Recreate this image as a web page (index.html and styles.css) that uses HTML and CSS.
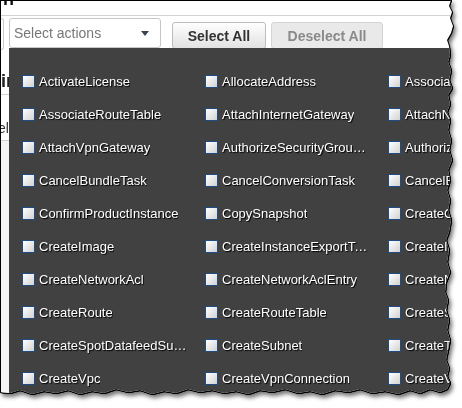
FILE: index.html
```html
<!DOCTYPE html>
<html>
<head>
<meta charset="utf-8">
<link rel="stylesheet" href="styles.css">
</head>
<body>
<div class="frame">
  <div class="paper">
    <div class="top"><span class="top-glyph">n</span></div>
    <div class="toolbar">
      <div class="stub"></div>
      <div class="select">
        <span class="select-text">Select actions</span>
        <span class="caret"></span>
      </div>
      <button class="btn btn-primary">Select All</button>
      <button class="btn btn-disabled">Deselect All</button>
    </div>
    <div class="main">
      <div class="side">
        <div class="side-head">ir</div>
        <div class="side-text">el</div>
        <div class="side-rest"></div>
      </div>
      <div class="panel">
        <label class="item"><input type="checkbox" class="box"><span>ActivateLicense</span></label>
        <label class="item"><input type="checkbox" class="box"><span>AllocateAddress</span></label>
        <label class="item"><input type="checkbox" class="box"><span>AssociateAddress</span></label>
        <label class="item"><input type="checkbox" class="box"><span>AssociateRouteTable</span></label>
        <label class="item"><input type="checkbox" class="box"><span>AttachInternetGateway</span></label>
        <label class="item"><input type="checkbox" class="box"><span>AttachNetworkInterface</span></label>
        <label class="item"><input type="checkbox" class="box"><span>AttachVpnGateway</span></label>
        <label class="item"><input type="checkbox" class="box"><span>AuthorizeSecurityGroupEgress</span></label>
        <label class="item"><input type="checkbox" class="box"><span>AuthorizeSecurityGroupIngress</span></label>
        <label class="item"><input type="checkbox" class="box"><span>CancelBundleTask</span></label>
        <label class="item"><input type="checkbox" class="box"><span>CancelConversionTask</span></label>
        <label class="item"><input type="checkbox" class="box"><span>CancelExportTask</span></label>
        <label class="item"><input type="checkbox" class="box"><span>ConfirmProductInstance</span></label>
        <label class="item"><input type="checkbox" class="box"><span>CopySnapshot</span></label>
        <label class="item"><input type="checkbox" class="box"><span>CreateCustomerGateway</span></label>
        <label class="item"><input type="checkbox" class="box"><span>CreateImage</span></label>
        <label class="item"><input type="checkbox" class="box"><span>CreateInstanceExportTask</span></label>
        <label class="item"><input type="checkbox" class="box"><span>CreateInternetGateway</span></label>
        <label class="item"><input type="checkbox" class="box"><span>CreateNetworkAcl</span></label>
        <label class="item"><input type="checkbox" class="box"><span>CreateNetworkAclEntry</span></label>
        <label class="item"><input type="checkbox" class="box"><span>CreateNetworkInterface</span></label>
        <label class="item"><input type="checkbox" class="box"><span>CreateRoute</span></label>
        <label class="item"><input type="checkbox" class="box"><span>CreateRouteTable</span></label>
        <label class="item"><input type="checkbox" class="box"><span>CreateSecurityGroup</span></label>
        <label class="item"><input type="checkbox" class="box"><span>CreateSpotDatafeedSubscription</span></label>
        <label class="item"><input type="checkbox" class="box"><span>CreateSubnet</span></label>
        <label class="item"><input type="checkbox" class="box"><span>CreateTags</span></label>
        <label class="item"><input type="checkbox" class="box"><span>CreateVpc</span></label>
        <label class="item"><input type="checkbox" class="box"><span>CreateVpnConnection</span></label>
        <label class="item"><input type="checkbox" class="box"><span>CreateVpnGateway</span></label>
      </div>
    </div>
  </div>
</div>
</body>
</html>
```
FILE: styles.css
```css
html, body {
  margin: 0;
  padding: 0;
  background: #fff;
}

.frame {
  width: 462px;
  height: 408px;
  filter: drop-shadow(1px 0 0 #000) drop-shadow(0 1px 0 #000) drop-shadow(2px 3px 2px rgba(0, 0, 0, 0.55));
}

.paper {
  width: 462px;
  height: 408px;
  box-sizing: border-box;
  background: #fff;
  border-top: 1px solid #000;
  border-left: 1px solid #000;
  overflow: hidden;
  display: flex;
  flex-direction: column;
  font-family: "Liberation Sans", Arial, sans-serif;
  clip-path: polygon(0 0, 451px 0, 449px 6px, 452px 12px, 450px 18px, 453px 26px, 451px 33px, 447px 40px, 449px 46px, 450px 55px, 448px 62px, 451px 70px, 449px 80px, 452px 88px, 448px 95px, 450px 104px, 447px 112px, 450px 120px, 448px 130px, 451px 140px, 449px 150px, 452px 160px, 448px 170px, 450px 180px, 447px 190px, 450px 200px, 448px 210px, 451px 220px, 449px 232px, 446px 240px, 449px 250px, 447px 262px, 450px 272px, 446px 282px, 445px 292px, 448px 300px, 446px 310px, 449px 320px, 447px 330px, 450px 340px, 448px 350px, 446px 360px, 449px 368px, 447px 376px, 450px 383px, 447px 389px, 440px 392px, 430px 389px, 420px 393px, 410px 390px, 398px 394px, 385px 391px, 372px 393px, 360px 389px, 348px 392px, 335px 390px, 322px 394px, 310px 391px, 298px 393px, 285px 389px, 272px 392px, 260px 390px, 248px 394px, 236px 391px, 224px 393px, 212px 390px, 200px 392px, 188px 389px, 176px 393px, 164px 391px, 152px 394px, 140px 390px, 128px 392px, 116px 389px, 104px 393px, 92px 391px, 80px 394px, 68px 390px, 56px 393px, 44px 391px, 32px 394px, 20px 390px, 10px 393px, 0 392px);
}

/* top strip with partial heading glyph */
.top {
  height: 14px;
  flex: none;
  border-bottom: 1px solid #d2d2d2;
  overflow: hidden;
}

.top-glyph {
  display: block;
  font-weight: bold;
  font-size: 18px;
  line-height: 18px;
  margin: -11px 0 0 2px;
  color: #111;
}

/* toolbar */
.toolbar {
  height: 32px;
  flex: none;
  display: flex;
  align-items: flex-start;
}

.stub {
  width: 2px;
  height: 30px;
  margin-top: 2px;
  border: 1px solid #c8c8c8;
  border-left: none;
  border-radius: 0 3px 3px 0;
  flex: none;
}

.select {
  width: 152px;
  height: 30px;
  margin: 2px 0 0 5px;
  box-sizing: border-box;
  border: 1px solid #c6c6c6;
  border-radius: 3px;
  background: #fff;
  display: flex;
  align-items: center;
  justify-content: space-between;
  padding: 0 11px 0 4px;
  flex: none;
}

.select-text {
  font-size: 14px;
  color: #777;
}

.caret {
  width: 0;
  height: 0;
  border-left: 4px solid transparent;
  border-right: 4px solid transparent;
  border-top: 5px solid #3b4552;
}

.btn {
  height: 27px;
  margin-top: 6px;
  box-sizing: border-box;
  border-radius: 3px;
  font-family: "Liberation Sans", Arial, sans-serif;
  font-weight: bold;
  font-size: 14px;
  padding: 0;
  flex: none;
}

.btn-primary {
  width: 94px;
  margin-left: 11px;
  border: 1px solid #bdbdbd;
  background: linear-gradient(#fefefe, #e2e2e2);
  color: #333;
}

.btn-disabled {
  width: 112px;
  margin-left: 5px;
  border: 1px solid #d4d4d4;
  background: #e9e9e9;
  color: #8a8a8a;
}

/* main area */
.main {
  flex: 1;
  display: flex;
  min-height: 0;
}

.side {
  width: 8px;
  flex: none;
  overflow: hidden;
  display: flex;
  flex-direction: column;
}

.side-head {
  margin-top: 23px;
  padding: 0 0 3px 0;
  height: 20px;
  line-height: 20px;
  font-size: 18px;
  font-weight: bold;
  color: #222;
  border-bottom: 1px solid #d2d2d2;
  white-space: nowrap;
}

.side-text {
  margin: 25px 0 0 -3px;
  font-size: 14px;
  line-height: 16px;
  color: #333;
  white-space: nowrap;
}

.side-rest {
  margin-top: 4px;
  flex: 1;
  border-top: 1px solid #d2d2d2;
  background: #f4f4f4;
}

.panel {
  flex: none;
  width: 560px;
  background: #414141;
  padding: 17px 0 0 13px;
  box-sizing: border-box;
  display: grid;
  grid-template-columns: repeat(3, 183px);
  grid-auto-rows: 33px;
  align-content: start;
}

.item {
  display: flex;
  align-items: center;
  gap: 4px;
  color: #fff;
  font-size: 13px;
  white-space: nowrap;
  text-shadow: 1px 1px 1px #000;
}

.item span {
  max-width: 150px;
  overflow: hidden;
  text-overflow: ellipsis;
  padding-bottom: 1px;
}

.box {
  appearance: none;
  -webkit-appearance: none;
  margin: 0;
  width: 13px;
  height: 13px;
  box-sizing: border-box;
  border: 1px solid #1e4c85;
  background: linear-gradient(135deg, #ffffff, #d2d2d2);
  flex: none;
}
```
